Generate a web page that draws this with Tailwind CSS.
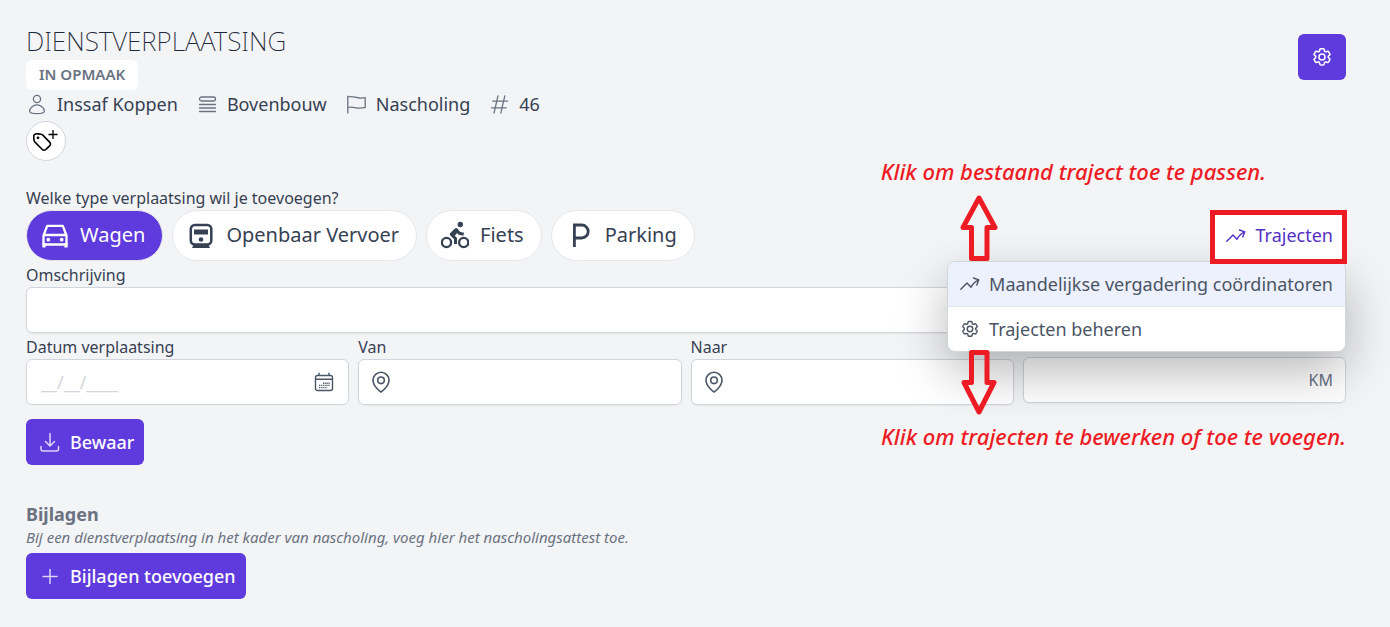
<!DOCTYPE html>
<html lang="nl">
<head>
<meta charset="utf-8">
<meta name="viewport" content="width=device-width, initial-scale=1">
<title>Dienstverplaatsing</title>
<script src="https://cdn.jsdelivr.net/npm/@tailwindcss/browser@4"></script>
</head>
<body class="min-h-screen bg-[#f3f4f6] font-['Noto_Sans',sans-serif] text-gray-700">
<svg class="hidden" aria-hidden="true">
  <symbol id="gear" viewBox="0 0 24 24" fill="none" stroke="currentColor" stroke-width="1.700" stroke-linecap="round" stroke-linejoin="round">
    <path d="M9.600 3.900c.1-.6.6-.9 1.100-.9h2.600c.5 0 1 .4 1.100.9l.2 1.300c.1.400.3.700.7.900l.2.1c.3.200.7.200 1.100.1l1.200-.5c.5-.2 1.100 0 1.400.5l1.300 2.200c.3.500.2 1.100-.3 1.400l-1 .8c-.3.300-.4.600-.4 1v.3c0 .4.1.7.4 1l1 .8c.4.400.5 1 .3 1.400l-1.300 2.200c-.3.500-.9.700-1.400.5l-1.200-.5c-.4-.1-.8-.1-1.100.1l-.2.1c-.3.200-.6.500-.7.900l-.2 1.300c-.1.500-.5.900-1.100.9h-2.600c-.5 0-1-.4-1.100-.9l-.2-1.300c-.1-.4-.3-.7-.6-.9l-.3-.1c-.3-.2-.7-.2-1.100-.1l-1.200.5c-.5.200-1.100 0-1.400-.5l-1.300-2.200c-.3-.5-.2-1.100.3-1.400l1-.8c.3-.3.4-.6.4-1v-.3c0-.4-.1-.7-.4-1l-1-.8c-.4-.4-.5-1-.3-1.400l1.300-2.200c.3-.5.900-.7 1.400-.5l1.200.5c.4.100.8.100 1.100-.1l.2-.1c.3-.2.6-.5.700-.9z"/>
    <circle cx="12" cy="12" r="3.300"/>
  </symbol>
  <symbol id="trend" viewBox="0 0 20 20" fill="none" stroke="currentColor" stroke-width="1.400" stroke-linecap="round" stroke-linejoin="round">
    <path d="M.8 15.200 7 9l4 4.200a16 16 0 0 1 7.600-7.400M13.500 4l5.300 1.800-2 5.300"/>
  </symbol>
  <symbol id="pin" viewBox="0 0 24 24" fill="none" stroke="currentColor" stroke-width="1.600" stroke-linejoin="round">
    <circle cx="12" cy="10.300" r="3.300"/><path d="M20 10.300c0 6.200-8 11.700-8 11.700S4 16.500 4 10.300a8 8 0 1 1 16 0z"/>
  </symbol>
</svg>

<main class="pt-[26px] pr-11 pb-7 pl-[26px]">
  <header class="flex items-start justify-between">
    <div>
      <h1 class="text-[26px] leading-[30px] font-extralight text-gray-800">DIENSTVERPLAATSING</h1>
      <span class="mt-1 inline-block rounded-md bg-white px-[13px] pb-[2px] text-[15px] leading-7 font-semibold text-gray-500">IN OPMAAK</span>
      <ul class="flex items-center gap-5 text-[18px] leading-7">
        <li class="flex items-center gap-[10px]">
          <svg class="size-[21px] text-gray-500" viewBox="0 0 21 21" fill="none" stroke="currentColor" stroke-width="1.300" aria-hidden="true"><circle cx="11" cy="5" r="3.600"/><path d="M11 10.900c-4 0-7.400 3.200-7.400 6.300 0 1.500 3.300 2.400 7.400 2.400s7.400-.9 7.400-2.400c0-3.100-3.400-6.300-7.400-6.300z"/></svg>
          Inssaf Koppen</li>
        <li class="flex items-center gap-[10px]">
          <svg class="size-[19px] text-gray-500" viewBox="0 0 19 19" fill="none" stroke="currentColor" stroke-width="1.300" stroke-linecap="round" aria-hidden="true"><rect x="1.500" y="2" width="16" height="4" rx="2"/><path d="M1.500 9.500h16M1.500 13h16M1.500 16.500h16"/></svg>
          Bovenbouw</li>
        <li class="flex items-center gap-[10px]">
          <svg class="size-[19px] text-gray-500" viewBox="0 0 19 19" fill="none" stroke="currentColor" stroke-width="1.300" stroke-linecap="round" stroke-linejoin="round" aria-hidden="true"><path d="M.8 18V1.200M.8 2c6-2 8.500 2.700 17.400.6v9.800C9.500 15 7 10.500.8 12.500"/></svg>
          Nascholing</li>
        <li class="flex items-center gap-[10px]">
          <svg class="size-[19px] text-gray-500" viewBox="0 0 19 19" fill="none" stroke="currentColor" stroke-width="1.300" stroke-linecap="round" aria-hidden="true"><path d="M8 .8 4 18.200M14.800.8l-4 17.400M2.800 6.200h14.700M1.500 12.800h14.700"/></svg>
          46</li>
      </ul>
      <button type="button" aria-label="Label toevoegen" class="mt-[3px] flex size-10 items-center justify-center rounded-full border border-gray-300 bg-white text-black">
        <svg class="size-[26px]" viewBox="0 0 26 26" fill="none" stroke="currentColor" stroke-width="1.600" stroke-linejoin="round" aria-hidden="true"><path d="M1.500 6.500c-1 .8-.9 2-.8 3.200l.4 2.600c.1.900.5 1.500 1.100 2.100l6.900 6.900c1.200 1.200 2.600 1.100 3.800.1l3.700-3.500c1.200-1.200 1.200-2.600 0-3.800l-6.500-6.700c-.6-.6-1.300-1-2.100-1.100l-3-.4c-1.300-.2-2.600-.2-3.500.6z"/><circle cx="5" cy="9.800" r=".6"/><path d="M20 2v9M15.500 6.500h9" stroke-width="1.300"/></svg>
      </button>
    </div>
    <button type="button" aria-label="Instellingen" class="mt-2 flex h-[46px] w-12 items-center justify-center rounded-md bg-[#5f3adc] text-white">
      <svg class="size-[22px]" aria-hidden="true"><use href="#gear"/></svg>
    </button>
  </header>

  <form class="mt-[25px]">
    <fieldset class="relative z-10">
      <legend class="text-[16px] leading-6">Welke type verplaatsing wil je toevoegen?</legend>
      <div class="flex items-center justify-between">
        <div class="flex gap-[9px] text-[20px] leading-7">
          <button type="button" aria-pressed="true" class="flex h-[51px] items-center gap-[11px] rounded-full border border-gray-200 bg-[#5f3adc] pr-[17px] pb-[2px] pl-[14px] text-white">
            <svg class="size-7" viewBox="0 0 28 28" fill="none" stroke="currentColor" stroke-width="2.300" stroke-linejoin="round" aria-hidden="true"><path d="M2.500 14.500 6.200 4.800h15.600l3.700 9.700v9H2.500zM2.500 14h23"/><circle cx="7.300" cy="18.700" r="1.900" fill="currentColor" stroke="none"/><circle cx="20.700" cy="18.700" r="1.900" fill="currentColor" stroke="none"/><path d="M3 22v4.500M25 22v4.500" stroke-width="3.200"/></svg>
            Wagen</button>
          <button type="button" class="flex h-[51px] items-center gap-[11px] rounded-full border border-gray-200 bg-white pr-[17px] pb-[2px] pl-[14px]">
            <svg class="size-7" viewBox="0 0 28 28" fill="none" stroke="currentColor" stroke-width="2.500" aria-hidden="true"><rect x="3.800" y="4" width="20.500" height="19.500" rx="4"/><path d="M7 8.500h14v5H7z" fill="currentColor" stroke="none"/><circle cx="14" cy="18.500" r="2.300" fill="currentColor" stroke="none"/><path d="m7 23-2 4h18l-2-4z" fill="currentColor" stroke="none"/></svg>
            Openbaar Vervoer</button>
          <button type="button" class="flex h-[51px] items-center gap-[11px] rounded-full border border-gray-200 bg-white pr-[17px] pb-[2px] pl-[14px]">
            <svg class="size-7" viewBox="0 0 28 28" fill="none" stroke="currentColor" stroke-width="2.300" aria-hidden="true"><circle cx="5.500" cy="21.500" r="4.600"/><circle cx="22.700" cy="21.500" r="4.600"/><circle cx="19.300" cy="3.500" r="2.700" fill="currentColor" stroke="none"/><path d="m14.500 23v-5.500l-4.300-4.200 5-4.800 3 3.800 4.500 1" stroke-width="3" stroke-linejoin="round"/><path d="m9 13 5-5.500 3.500 3-4 4.500 2.500 3-1.500 3-1.500-3z" fill="currentColor" stroke="none"/></svg>
            Fiets</button>
          <button type="button" class="flex h-[51px] items-center gap-[11px] rounded-full border border-gray-200 bg-white pr-[17px] pb-[2px] pl-[14px]">
            <svg class="size-7" viewBox="0 0 28 28" fill="none" stroke="currentColor" stroke-width="2.800" aria-hidden="true"><path d="M8.400 26V4h7.300a6.500 6.500 0 0 1 0 13H8.400"/></svg>
            Parking</button>
        </div>
        <button type="button" aria-haspopup="menu" aria-expanded="true" class="relative flex h-[50px] items-center gap-[10px] rounded-md bg-white px-[13px] text-[18px] text-[#5330c4]">
          <svg class="size-5" aria-hidden="true"><use href="#trend"/></svg>
          Trajecten
          <span class="absolute -top-px -right-px -bottom-[3px] -left-[3px] border-[5px] border-[#ed1c24]"></span>
        </button>
      </div>

      <div role="menu" class="absolute top-[51px] right-0 -z-10 overflow-hidden rounded-lg border border-gray-300 bg-white text-[18px] text-gray-600 shadow-[0_20px_50px_0_rgb(0_0_0/0.28)]">
        <button type="button" role="menuitem" class="flex h-[45px] w-full items-center gap-[9px] border-b border-gray-200 bg-[#edf0fd] px-3">
          <svg class="size-5" aria-hidden="true"><use href="#trend"/></svg>
          Maandelijkse vergadering coördinatoren</button>
        <button type="button" role="menuitem" class="flex h-[44px] w-full items-center gap-[9px] px-3">
          <svg class="size-5" aria-hidden="true"><use href="#gear"/></svg>
          Trajecten beheren</button>
      </div>

      <p class="absolute -top-[51px] right-20 font-['Segoe_Print','Noto_Sans',sans-serif] text-[22px] leading-6 font-medium whitespace-nowrap text-[#ed1c24] italic">Klik om bestaand traject toe te passen.</p>
      <svg class="absolute -top-[15px] right-[348px] h-[66px] w-[38px]" viewBox="0 0 38 66" fill="none" stroke="#ed1c24" stroke-width="5" stroke-linejoin="round" aria-hidden="true"><path d="M19 3 35 32.500h-8V63.500H11.500V32.500H3z"/></svg>
      <svg class="absolute top-[140px] right-[348px] h-[66px] w-[38px]" viewBox="0 0 38 66" fill="none" stroke="#ed1c24" stroke-width="5" stroke-linejoin="round" aria-hidden="true"><path d="M19 62 34 32.500h-7V2.500H11.500V32.500H4z"/></svg>
      <p class="absolute top-[214px] right-0 font-['Segoe_Print','Noto_Sans',sans-serif] text-[22px] leading-6 font-medium whitespace-nowrap text-[#ed1c24] italic">Klik om trajecten te bewerken of toe te voegen.</p>
    </fieldset>

    <label for="desc" class="mt-[2px] block text-[16px] leading-6">Omschrijving</label>
    <input id="desc" type="text" class="block h-[46px] w-full rounded-md border border-gray-300 bg-white px-3 shadow-xs">

    <div class="mt-[2px] grid grid-cols-4 gap-[9px] text-[16px]">
      <div>
        <label for="date" class="block leading-6">Datum verplaatsing</label>
        <div class="flex h-[46px] items-center rounded-md border border-gray-300 bg-white px-[14px]">
          <input id="date" type="text" placeholder="__/__/____" class="min-w-0 flex-1 text-[18px] outline-none placeholder:text-gray-300">
          <svg class="size-5 text-gray-600" viewBox="0 0 20 20" fill="none" stroke="currentColor" stroke-width="1.400" aria-hidden="true"><rect x="1.500" y="3.500" width="17" height="15" rx="2"/><path d="M1.500 7.300h17M5 .8v3M15 .8v3"/><path d="M9 11.200h7M5 13.400h11M5 15.600h8" stroke-dasharray="1.300 .8"/></svg>
        </div>
      </div>
      <div>
        <label for="from" class="block leading-6">Van</label>
        <div class="flex h-[46px] items-center gap-2 rounded-md border border-gray-300 bg-white px-[10px] shadow-xs">
          <svg class="size-6 text-gray-600" aria-hidden="true"><use href="#pin"/></svg>
          <input id="from" type="text" class="min-w-0 flex-1 text-[18px] outline-none">
        </div>
      </div>
      <div>
        <label for="to" class="block leading-6">Naar</label>
        <div class="flex h-[46px] items-center gap-2 rounded-md border border-gray-300 bg-white px-[10px] shadow-xs">
          <svg class="size-6 text-gray-600" aria-hidden="true"><use href="#pin"/></svg>
          <input id="to" type="text" class="min-w-0 flex-1 text-[18px] outline-none">
        </div>
      </div>
      <div class="pt-[22px]">
        <div class="flex h-[46px] items-center rounded-md border border-gray-300 bg-white px-3 shadow-xs">
          <input id="km" type="text" class="min-w-0 flex-1 text-[18px] outline-none">
          <label for="km" class="text-gray-500">KM</label>
        </div>
      </div>
    </div>

    <button type="submit" class="mt-[14px] flex h-[46px] items-center gap-[10px] rounded-md bg-[#5f3adc] pr-[10px] pl-[13px] text-[18px] font-medium text-white">
      <svg class="size-[21px] text-[#dcd4fa]" viewBox="0 0 21 21" fill="none" stroke="currentColor" stroke-width="1.500" stroke-linecap="round" stroke-linejoin="round" aria-hidden="true"><path d="M11 1.500v12M6.500 9.500l4.500 4.500 4.500-4.500M2 14.500v2.500a2 2 0 0 0 2 2h13.500a2 2 0 0 0 2-2v-2.500"/></svg>
      Bewaar</button>
  </form>

  <section class="mt-[37px]">
    <h2 class="text-[18px] leading-6 font-bold text-gray-500">Bijlagen</h2>
    <p class="text-[15px] leading-[22px] text-gray-500 italic">Bij een dienstverplaatsing in het kader van nascholing, voeg hier het nascholingsattest toe.</p>
    <button type="button" class="mt-[5px] flex h-[46px] items-center gap-[10px] rounded-md bg-[#5f3adc] pr-[10px] pl-[13px] text-[18px] font-medium text-white">
      <svg class="size-[21px] text-[#dcd4fa]" viewBox="0 0 21 21" fill="none" stroke="currentColor" stroke-width="1.500" stroke-linecap="round" aria-hidden="true"><path d="M11 3.500v14M4 10.500h14"/></svg>
      Bijlagen toevoegen</button>
  </section>
</main>
</body>
</html>
